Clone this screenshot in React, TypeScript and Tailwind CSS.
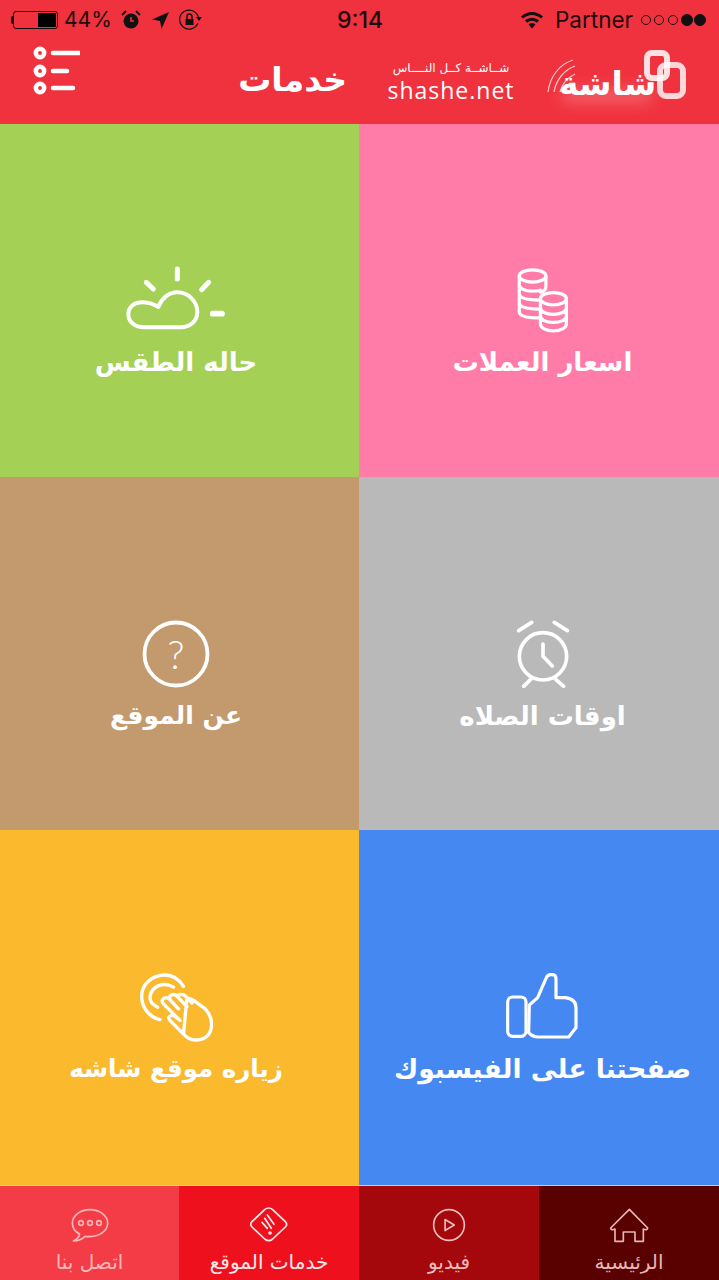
import React from "react";

const arabic = "font-['DejaVu_Sans',sans-serif]";

function Ico({ w, h, vb, sw = 10, className = "", children }: { w: number; h: number; vb: string; sw?: number; className?: string; children: React.ReactNode }) {
  return (
    <svg width={w} height={h} viewBox={vb} fill="none" stroke="currentColor" strokeWidth={sw} strokeLinecap="round" strokeLinejoin="round" className={className}>
      {children}
    </svg>
  );
}

const Weather = () => (
  <Ico w={100} h={70} vb="108 30 300 210" sw={12}>
    <path d="M262 42V72M169 82L190 102M356 82L335 104" strokeWidth="15" />
    <path d="M368 176H396" strokeWidth="17" />
    <path d="M163 217C133 217 115 200 115 178C115 155 133 142 155 142C175 142 192 148 205 156C215 130 236 112 262 112C296 112 322 140 322 172C322 198 300 217 272 217Z" />
  </Ico>
);

const Coins = () => (
  <Ico w={52} h={68} vb="200 30 160 204" sw={10}>
    <path d="M272 108C288 104 289 98 289 85V60" />
    <ellipse cx="248" cy="58" rx="41" ry="19" />
    <path d="M207 58V168C207 180 226 187 268 187M207 85C207 98 226 105 248 105C255 105 265 104 272 102M207 112C207 125 226 132 268 132M207 140C207 153 226 160 268 160" />
    <ellipse cx="312" cy="128" rx="40" ry="19" />
    <path d="M272 128V205C272 218 290 227 312 227C334 227 352 218 352 205V128M272 155C272 168 290 176 312 176C334 176 352 168 352 155M272 180C272 193 290 201 312 201C334 201 352 193 352 180" />
  </Ico>
);

const Alarm = () => (
  <Ico w={54} h={68} vb="196 28 162 204" sw={11}>
    <path d="M204 60L243 35M311 35L350 60M240 206L219 227M315 206L339 227" />
    <circle cx="277" cy="137" r="71" />
    <path d="M277 100V137L305 166" />
  </Ico>
);

const Question = () => (
  <svg width={68} height={68} viewBox="0 0 68 68" fill="none" className="text-white">
    <circle cx="34" cy="34" r="31.5" stroke="currentColor" strokeWidth="3.8" />
    <text x="34" y="48.5" textAnchor="middle" fill="currentColor" fontSize="40" fontWeight="300" fontFamily="Lato, sans-serif">?</text>
  </svg>
);

const Hand = () => (
  <Ico w={73} h={69} vb="15 8 218 206" sw={10}>
    <path d="M145 48C130 24 110 14 90 14C50 14 20 42 20 78C20 112 45 142 75 147" />
    <path d="M115 50C105 44 92 41 80 43C60 47 45 62 45 82C45 94 55 104 68 110" />
    <path d="M145 190L105 150Q95 138 108 135Q115 133 125 142L135 150L85 100Q75 88 90 82Q98 80 105 88L130 115M105 88Q100 78 110 73Q120 70 128 80L155 108M128 80Q128 72 138 72Q148 72 155 82L170 98M155 82Q165 84 175 90L210 115Q232 140 228 170Q222 208 180 208Q160 208 145 190Z" />
  </Ico>
);

const Thumb = () => (
  <Ico w={74} h={68} vb="350 26 222 204" sw={9.5}>
    <rect x="355" y="98" width="55" height="118" rx="15" />
    <path d="M420 122L445 100L470 42Q474 31 484 31H488Q500 31 500 43V100H528Q560 104 560 130V190L538 218H445Q430 218 418 205Z" />
  </Ico>
);

function Tile({ bg, label, icon, offset, size = "text-[26px]" }: { bg: string; label: string; icon: React.ReactNode; offset: string; size?: string }) {
  return (
    <div className={`flex flex-col items-center text-white ${bg} ${offset}`}>
      <div className="flex h-[68px] items-center justify-center">{icon}</div>
      <div dir="rtl" className={`${arabic} mt-[10px] whitespace-nowrap ${size} leading-[36px] font-bold`}>{label}</div>
    </div>
  );
}

function Tab({ bg, label, icon, color }: { bg: string; label: string; icon: React.ReactNode; color: string }) {
  return (
    <div className={`flex flex-col items-center pt-[14px] ${bg} ${color}`}>
      <div className="flex h-[50px] items-center justify-center">{icon}</div>
      <div dir="rtl" className={`${arabic} whitespace-nowrap text-[20px] leading-[24px]`}>{label}</div>
    </div>
  );
}

export default function App() {
  return (
    <div className="flex h-[1280px] w-[719px] flex-col overflow-hidden bg-white font-['Inter',sans-serif]">
      <header className="h-[124px] shrink-0 bg-[#f0323e]">
        <div className="flex h-[40px] items-center text-[21px] text-[#1d0a0c]">
          <div className="ml-[11px] flex w-[48px] items-center">
            <div className="h-[8px] w-[2px] rounded-l bg-[#1d0a0c]" />
            <div className="flex h-[18px] w-[45px] justify-end rounded-[3px] border border-[#1d0a0c] p-[1px]">
              <div className="h-full w-[18px] bg-black" />
            </div>
          </div>
          <span className="ml-[5px] w-[50px] whitespace-nowrap">44%</span>
          <svg width="20" height="20" viewBox="0 0 20 20" className="ml-[7px]" fill="#111">
            <circle cx="10" cy="11" r="7.5" />
            <path d="M10 7v4h3" stroke="#f0323e" strokeWidth="1.6" fill="none" />
            <path d="M1 5L5 1M19 5L15 1" stroke="#111" strokeWidth="1.8" />
          </svg>
          <svg width="18" height="18" viewBox="0 0 18 18" className="ml-[10px]" fill="#111">
            <path d="M18 1L1 8.5L9 10L10.5 18Z" />
          </svg>
          <svg width="24" height="22" viewBox="0 0 24 22" className="ml-[10px]" fill="none" stroke="#111" strokeWidth="1.2">
            <path d="M19 14A9.5 9.5 0 1 1 19.5 9" />
            <path d="M17 8L23 8L20 12Z" fill="#111" stroke="none" />
            <rect x="6.5" y="10" width="8" height="6" fill="#111" stroke="none" />
            <path d="M8 10V7.5A2.5 2.5 0 0 1 13 7.5V10" strokeWidth="1.5" />
          </svg>
          <span className="ml-[131px] w-[52px] text-center text-[23px] font-medium whitespace-nowrap">9:14</span>
          <svg width="24" height="18" viewBox="0 0 24 18" className="ml-[134px]" fill="none" stroke="#111" strokeWidth="3">
            <path d="M2 6.5C8 1 16 1 22 6.5M6 10.5C9.5 7.5 14.5 7.5 18 10.5" />
            <path d="M8.5 13.5L12 17.5L15.5 13.5C13.5 11.5 10.5 11.5 8.5 13.5Z" fill="#111" stroke="none" />
          </svg>
          <span className="ml-[11px] w-[79px] whitespace-nowrap text-[22.5px]">Partner</span>
          <svg width="68" height="14" viewBox="0 0 68 14" className="ml-[5px]" fill="none" stroke="#111">
            <circle cx="7" cy="7" r="4.5" />
            <circle cx="20" cy="7" r="4.5" />
            <circle cx="34" cy="7" r="4.5" />
            <circle cx="48" cy="7" r="5.5" fill="#111" />
            <circle cx="61" cy="7" r="5.5" fill="#111" />
          </svg>
        </div>
        <div className="flex h-[84px] items-start text-white">
          <svg width="50" height="56" viewBox="30 45 50 56" className="ml-[30px] mt-[5px]" fill="none" stroke="#fff" strokeLinecap="round">
            <g strokeWidth="4.5">
              <circle cx="40" cy="53" r="4.2" />
              <circle cx="40" cy="71" r="4.2" />
              <circle cx="40" cy="88" r="4.2" />
              <path d="M53 53H80M53 71H67M53 88H73" />
            </g>
          </svg>
          <div dir="rtl" className={`${arabic} ml-[160px] mt-[20px] w-[107px] text-center text-[33px] leading-[40px] font-bold whitespace-nowrap`}>خدمات</div>
          <div className="ml-[40px] mt-[21px] flex w-[128px] flex-col items-center">
            <div dir="rtl" className={`${arabic} text-[12px] leading-[14px] whitespace-nowrap`}>شــاشــة كــل النــــاس</div>
            <div className="text-[23px] leading-[30px] tracking-[1px] font-['Open_Sans',sans-serif] whitespace-nowrap">shashe.net</div>
          </div>
          <div className="relative ml-[31px] mt-[8px] h-[56px] w-[142px]">
            <div className="absolute left-[16px] top-[44px] h-[8px] w-[90px] rounded-full bg-white/40 blur-sm" />
            <svg width="142" height="56" viewBox="545 48 142 56" className="absolute left-0 top-0" fill="none" stroke="#fff">
              <path d="M547 92C549 76 559 64 572 60M553 92C555 80 563 70 574 66M559 92C561 84 566 78 574 74" strokeWidth="1.2" opacity="0.75" />
              <rect x="646" y="53" width="20" height="25" rx="5" strokeWidth="6" opacity="0.85" />
              <rect x="659" y="65" width="23" height="31" rx="6" strokeWidth="6" opacity="0.8" />
            </svg>
            <div dir="rtl" className={`${arabic} absolute left-[13px] top-[17px] text-[33px] leading-[38px] font-bold whitespace-nowrap`}>شاشة</div>
          </div>
        </div>
      </header>

      <main className="grid h-[1061px] shrink-0 grid-cols-[359px_360px] grid-rows-[353px_353px_355px]">
        <Tile bg="bg-[#a3d055]" offset="pt-[142px] pr-[7px]" label="حاله الطقس" icon={<Weather />} />
        <Tile bg="bg-[#ff7ba8]" offset="pt-[142px] pl-[7px]" label="اسعار العملات" icon={<Coins />} />
        <Tile bg="bg-[#c39a6e]" offset="pt-[143px] pr-[7px]" size="text-[25px]" label="عن الموقع" icon={<Question />} />
        <Tile bg="bg-[#b9b9b9]" offset="pt-[143px] pl-[7px]" label="اوقات الصلاه" icon={<Alarm />} />
        <Tile bg="bg-[#fbb92e]" offset="pt-[143px] pr-[7px]" size="text-[24.5px]" label="زياره موقع شاشه" icon={<Hand />} />
        <Tile bg="bg-[#4688f1]" offset="pt-[143px] pl-[7px]" size="text-[26.5px]" label="صفحتنا على الفيسبوك" icon={<Thumb />} />
      </main>

      <div className="h-px shrink-0 bg-[#cfcfcf]" />

      <nav className="grid h-[94px] shrink-0 grid-cols-[179px_180px_180px_180px]">
        <Tab
          bg="bg-[#f33c46]"
          color="text-[#fbb6b9]"
          label="اتصل بنا"
          icon={
            <Ico w={38} h={36} vb="208 84 114 108" sw={5}>
              <path d="M265 92C236 92 212 110 212 132C212 146 220 158 234 165C232 174 224 182 215 186C228 187 243 180 250 172C255 173 260 173 265 173C294 173 318 155 318 132C318 110 294 92 265 92Z" />
              <circle cx="238" cy="132" r="7" />
              <circle cx="265" cy="132" r="7" />
              <circle cx="292" cy="132" r="7" />
            </Ico>
          }
        />
        <Tab
          bg="bg-[#ee111d]"
          color="text-[#fde8e9]"
          label="خدمات الموقع"
          icon={
            <Ico w={38} h={36} vb="746 84 114 108" sw={5}>
              <path d="M790 92Q802 82 814 92L852 128Q860 136 852 144L814 180Q802 190 790 180L752 144Q744 136 752 128Z" />
              <path d="M782 130L798 148M790 118L810 148M798 108L818 136" />
              <circle cx="806" cy="162" r="3" />
            </Ico>
          }
        />
        <Tab
          bg="bg-[#a4080c]"
          color="text-[#eebcbc]"
          label="فيديو"
          icon={
            <Ico w={34} h={34} vb="210 86 104 102" sw={5}>
              <circle cx="262" cy="137" r="47" />
              <path d="M250 120L278 137L250 154Z" />
            </Ico>
          }
        />
        <Tab
          bg="bg-[#590000]"
          color="text-[#e4b6b6]"
          label="الرئيسية"
          icon={
            <Ico w={40} h={36} vb="742 90 120 108" sw={5}>
              <path d="M747 153L803 97L858 153C858 158 852 160 845 156V193H820V165H785V193H760V156C752 160 747 158 747 153Z" />
            </Ico>
          }
        />
      </nav>
    </div>
  );
}
